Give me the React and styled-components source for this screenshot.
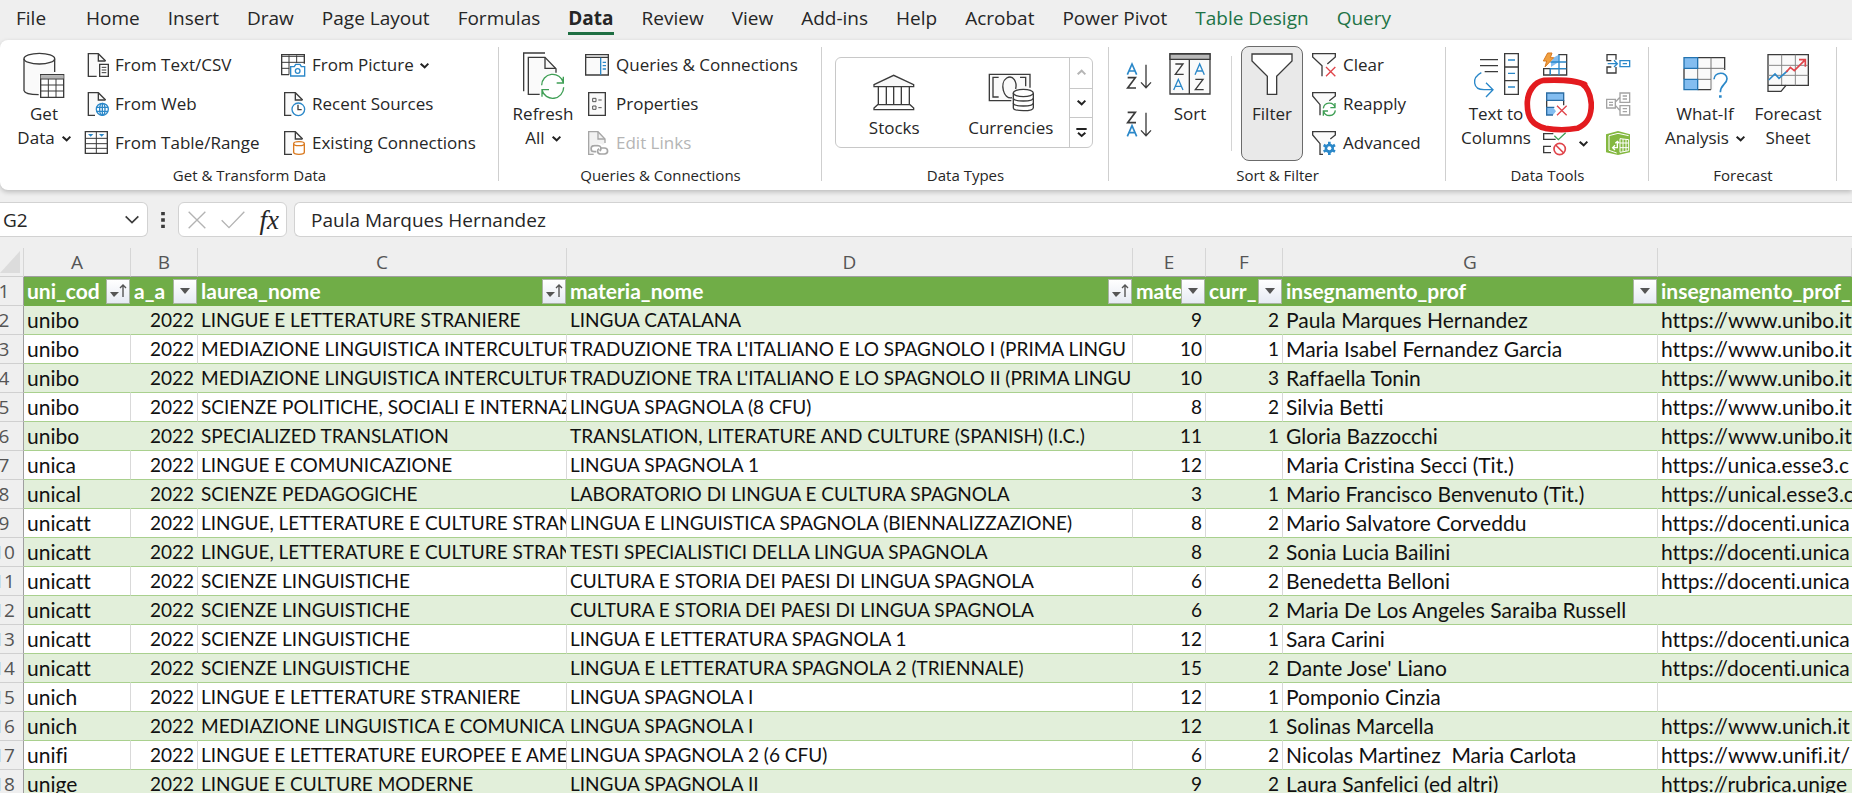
import React from "react";
import styled, { createGlobalStyle, css } from "styled-components";

const INK = "#3b3b3b";
const BLUE = "#2b88c9";
const GREEN = "#3f9f55";
const RED = "#e0454b";
const ORANGE = "#d9791f";

const GlobalStyle = createGlobalStyle`
  * { box-sizing: border-box; }
  body { margin: 0; background: #efefef; overflow: hidden; }
  button, input { font: inherit; color: inherit; }
`;

const Page = styled.div`
  display: flex;
  flex-direction: column;
  height: 100vh;
  overflow: hidden;
  background: #efefef;
  color: #262626;
  font-family: "Open Sans", "Noto Sans", sans-serif;
  font-size: 17px;
`;

/* ---------- tabs ---------- */
const TabBar = styled.nav`
  display: flex;
  flex: none;
  gap: 28px;
  height: 40px;
  padding: 3px 0 0 16px;
`;
const Tab = styled.button`
  border: 0;
  background: none;
  padding: 0;
  height: 32px;
  white-space: nowrap;
  font-size: 19px;
  font-weight: ${(p) => (p.$active ? 700 : 400)};
  color: ${(p) => (p.$contextual ? "#217346" : "#262626")};
  border-bottom: 3px solid ${(p) => (p.$active ? "#1e6e42" : "transparent")};
  &:first-child { margin-right: 12px; }
`;

/* ---------- ribbon ---------- */
const Ribbon = styled.section`
  display: flex;
  flex: none;
  height: 150px;
  padding: 5px 0 2px;
  background: #fff;
  border-radius: 8px 0 0 8px;
  box-shadow: 0 2px 5px rgba(0, 0, 0, 0.22);
  overflow: hidden;
`;
const Group = styled.div`
  position: relative;
  display: flex;
  flex-direction: column;
  flex: none;
  width: ${(p) => p.$width}px;
  &::after {
    content: "";
    position: absolute;
    right: 0;
    top: 2px;
    bottom: 7px;
    width: 1px;
    background: #cfcfcf;
  }
`;
const GroupBody = styled.div`
  display: flex;
  height: 120px;
  padding-left: ${(p) => p.$inset}px;
  gap: ${(p) => p.$gap}px;
`;
const GroupLabel = styled.div`
  text-align: center;
  font-size: 15px;
  line-height: 20px;
`;
const LargeButton = styled.button`
  display: flex;
  flex-direction: column;
  align-items: center;
  flex: none;
  gap: 4px;
  width: ${(p) => p.$width}px;
  height: 115px;
  margin-top: 1px;
  padding: 5px 0 0;
  line-height: 24px;
  white-space: nowrap;
  border: 1px solid ${(p) => (p.$pressed ? "#6b6b6b" : "transparent")};
  border-radius: 8px;
  background: ${(p) => (p.$pressed ? "#e9e9e9" : "none")};
`;
const IconBox = styled.span`
  display: flex;
  justify-content: center;
  height: 46px;
`;
const SmallColumn = styled.div`
  display: flex;
  flex-direction: column;
  flex: none;
  width: ${(p) => (p.$width ? p.$width + "px" : "auto")};
`;
const SmallButton = styled.button`
  display: flex;
  align-items: center;
  gap: 7px;
  height: 39px;
  padding: 0;
  border: 0;
  background: none;
  white-space: nowrap;
  &:disabled { color: #b5b5b5; }
`;
const Svg = styled.svg`
  display: block;
  flex: none;
  overflow: visible;
  fill: none;
  stroke: ${INK};
  stroke-width: 4;
`;
const InlineChevron = styled(Svg)`
  display: inline-block;
  vertical-align: baseline;
  margin-left: ${(p) => p.$gap || 0}px;
  margin-bottom: 1px;
`;
const SortColumn = styled.div`
  display: flex;
  flex-direction: column;
  gap: 23px;
  padding-top: 19px;
`;
const IconButton = styled.button`
  display: flex;
  align-items: center;
  justify-content: center;
  padding: 0;
  border: 0;
  background: none;
`;
const Divider = styled.div`
  width: 1px;
  height: 95px;
  margin: 11px 0 0 2px;
  background: #d4d4d4;
`;

/* ---------- data types gallery ---------- */
const Gallery = styled.div`
  display: grid;
  grid-template-columns: 1fr 1fr 23px;
  width: 258px;
  height: 91px;
  margin-top: 12px;
  border: 1px solid #c8c8c8;
  border-radius: 6px;
`;
const GalleryItem = styled.button`
  display: flex;
  flex-direction: column;
  align-items: center;
  justify-content: flex-end;
  gap: 1px;
  padding: 0 0 7px;
  border: 0;
  background: none;
  line-height: 24px;
`;
const GalleryIcon = styled.span`
  display: flex;
  align-items: center;
  height: 46px;
`;
const GalleryScroll = styled.div`
  display: grid;
  grid-template-rows: 1fr 1fr 1fr;
  border-left: 1px solid #c8c8c8;
  & > button + button { border-top: 1px solid #c8c8c8; }
`;

const RedMark = styled.svg`
  position: absolute;
  left: 74px;
  top: 30px;
  fill: none;
  pointer-events: none;
`;

/* ---------- formula bar ---------- */
const FormulaBar = styled.div`
  display: flex;
  align-items: center;
  flex: none;
  height: 35px;
  margin-top: 12px;
  font-size: 19px;
`;
const Field = styled.div`
  display: flex;
  align-items: center;
  height: 35px;
  background: #fff;
  border: 1px solid #d2d2d2;
  border-radius: 6px;
`;
const NameBox = styled(Field)`
  width: 148px;
  border-left: 0;
  border-radius: 0 6px 6px 0;
  padding: 0 8px 0 3px;
`;
const BareInput = styled.input`
  flex: 1;
  min-width: 0;
  padding: 0;
  border: 0;
  outline: 0;
  background: none;
`;
const Dots = styled(Svg)`
  margin: 0 13px;
`;
const FormulaButtons = styled(Field)`
  width: 109px;
  justify-content: space-between;
  padding: 0 7px 0 9px;
`;
const Fx = styled.span`
  font: italic 400 27px/28px "Liberation Serif", serif;
`;
const FormulaField = styled(Field)`
  flex: 1;
  margin-left: 7px;
  padding-left: 16px;
  border-right: 0;
  border-radius: 6px 0 0 6px;
`;

/* ---------- sheet ---------- */
const SheetArea = styled.main`
  flex: 1;
  min-height: 0;
  overflow: hidden;
  margin: 11px 0 0 -15px;
`;
const Sheet = styled.table`
  width: 100%;
  table-layout: fixed;
  border-collapse: separate;
  border-spacing: 0;
  font-family: Lato, "Open Sans", sans-serif;
  font-size: 19px;
  font-variant-ligatures: none;
  color: #111;
  td, th {
    height: 29px;
    padding: 0 3px;
    line-height: 28px;
    white-space: nowrap;
    overflow: hidden;
  }
`;
const headingFace = css`
  font-family: "Open Sans", "Noto Sans", sans-serif;
  font-size: 19px;
  font-weight: 400;
  color: #555;
  background: #efefef;
  text-align: center;
`;
const ColumnHeading = styled.th`
  ${headingFace}
  border-right: 1px solid #d6d6d6;
  border-bottom: 1px solid #9f9f9f;
`;
const Corner = styled.th`
  ${headingFace}
  border-right: 1px solid #d6d6d6;
  border-bottom: 1px solid #cfcfcf;
  svg { margin-left: auto; }
`;
const RowHeading = styled.th`
  ${headingFace}
  border-right: 1px solid #9f9f9f;
  border-bottom: 1px solid #d0d0d0;
`;
const FieldHeading = styled.th`
  background: #70ad47;
  border-bottom: 1px solid #70ad47;
  color: #fff;
  font-size: 21px;
  font-weight: 700;
  text-align: left;
`;
const FieldInner = styled.div`
  display: flex;
  align-items: center;
  margin-right: -2px;
  height: 28px;
  span { flex: 1; min-width: 0; overflow: hidden; }
`;
const FilterButton = styled.button`
  display: flex;
  align-items: center;
  justify-content: center;
  flex: none;
  width: 24px;
  height: 25px;
  padding: 0;
  border: 1px solid #a9b3a4;
  background: linear-gradient(#fff, #e6eaf3);
`;
const Cell = styled.td`
  font-size: ${(p) => (p.$mixedCase ? 21 : 19)}px;
  text-align: ${(p) => (p.$number ? "right" : "left")};
  background: ${(p) => (p.$band ? "#e2efda" : "#fff")};
  border-bottom: 1px solid #a9d08e;
  border-right: 1px solid ${(p) => (p.$band ? "#e2efda" : "#d9d9d9")};
  &:last-child { border-right: 0; }
`;

/* ---------- icons ---------- */
const Small = ({ children, ...rest }) => (
  <Svg width="24" height="24" viewBox="0 0 72 72" aria-hidden="true" {...rest}>{children}</Svg>
);
const Sheetlet = ({ cut = "M40 70H13V2H43" }) => (
  <>
    <path d={cut + "L65 24"} fill="#fafafa" />
    <path d="M43 3V24H64" />
  </>
);
const TextCsvIcon = () => (
  <Small>
    <Sheetlet cut="M38 70H13V2H43" />
    <path d="M47 34H73V70H47Z" fill="#fff" />
    <path d="M53 43H67M53 51H67M53 59H67" strokeWidth="3" />
  </Small>
);
const WebIcon = () => (
  <Small>
    <Sheetlet cut="M33 70H13V2H43" />
    <circle cx="55" cy="52" r="18" fill="#fff" stroke={BLUE} />
    <ellipse cx="55" cy="52" rx="8" ry="18" stroke={BLUE} />
    <path d="M38 46H72M38 58H72M55 34V70" stroke={BLUE} />
  </Small>
);
const TableRangeIcon = () => (
  <Small>
    <path d="M4 2H70V67H4Z" fill="#fff" />
    <path d="M4 22H70M4 38H70M4 52H70M37 2V67" strokeWidth="3" />
    <path d="M12 9H28L20 17ZM45 9H61L53 17Z" fill={BLUE} stroke="none" />
  </Small>
);
const PictureIcon = () => (
  <Small>
    <path d="M24 65H2V5H70V32" fill="#fff" />
    <path d="M2 10H70M2 28H70M2 46H25M24 7V65M47 7V30" strokeWidth="3" />
    <path d="M29 41H40L44 34H57L61 41H71V69H29Z" fill="#fff" stroke={BLUE} />
    <circle cx="50" cy="54" r="7" stroke={BLUE} />
  </Small>
);
const RecentIcon = () => (
  <Small>
    <Sheetlet cut="M31 70H11V2H43" />
    <circle cx="52" cy="52" r="19" fill="#fff" stroke={BLUE} />
    <path d="M51 38V53H62" />
  </Small>
);
const ExistingIcon = () => (
  <Small>
    <Sheetlet cut="M33 70H11V2H43" />
    <path d="M38 38V64C38 72 70 72 70 64V38" fill="#fff" stroke={ORANGE} />
    <ellipse cx="54" cy="38" rx="16" ry="6" fill="#fff" stroke={ORANGE} />
  </Small>
);
const PaneIcon = () => (
  <Small>
    <path d="M2 5H70V66H2Z" fill="#fafafa" />
    <path d="M2 13H70" />
    <path d="M47 14V65M53 28H63M53 38H63M53 48H63" stroke={BLUE} />
  </Small>
);
const PropertiesIcon = () => (
  <Small>
    <path d="M11 2H61V70H11Z" fill="#fafafa" />
    <path d="M23 19H33V29H23ZM23 42H33V52H23ZM40 24H50M40 47H50" strokeWidth="3" stroke="#555" />
  </Small>
);
const EditLinksIcon = () => (
  <Small style={{ stroke: "#a6a6a6" }}>
    <path d="M26 70H11V2H39L60 24V36" fill="#f2f2f2" />
    <path d="M39 3V24H60" />
    <rect x="22" y="44" width="30" height="18" rx="9" fill="#fff" stroke="#fff" strokeWidth="12" />
    <path d="M34 62H28C15 62 15 44 28 44H39C48 44 51 54 44 60M48 51H58C71 51 71 69 58 69H47C37 69 35 58 42 53" strokeWidth="5" />
  </Small>
);
const GetDataIcon = () => (
  <Svg width="42" height="46" viewBox="0 0 126 138" aria-hidden="true">
    <path d="M3 20V118C3 124 22 130 48 128V70H95V20" fill="#fafafa" stroke="none" />
    <ellipse cx="49" cy="20" rx="46" ry="16" fill="#fff" />
    <path d="M3 20V116C5 124 24 128 47 128M95 20V60" />
    <path d="M53 68H122V136H53Z" fill="#fff" />
    <path d="M53 70H122V80H53Z" fill="#b5b5b5" stroke="none" />
    <path d="M53 81H122M53 99H122M53 117H122M76 81V136M99 81V136" strokeWidth="3" />
  </Svg>
);
const RefreshIcon = () => (
  <Svg width="41" height="46" viewBox="0 0 123 138" aria-hidden="true">
    <path d="M2 118V3H66" />
    <path d="M50 127H16V16H66L99 50V62" fill="#fafafa" />
    <path d="M66 17V49H98" />
    <circle cx="89" cy="103" r="38" fill="#fff" stroke="none" />
    <path d="M56 100A33 33 0 0 1 121 92M121 74V93H101M122 106A33 33 0 0 1 57 114M57 134V113H78" stroke={GREEN} />
  </Svg>
);
const StocksIcon = () => (
  <Svg width="42" height="37" viewBox="0 0 126 111" aria-hidden="true">
    <path d="M3 32L62 4L122 32V38H3Z" fill="#f7f7f7" />
    <path d="M16 38V91M40 38V91M62 38V91M85 38V91M109 38V91" />
    <path d="M14 92H111L122 102V107H3V102Z" />
  </Svg>
);
const CurrenciesIcon = () => (
  <Svg width="46" height="39" viewBox="0 0 138 117" aria-hidden="true">
    <path d="M70 83H4V4H126V44" fill="#fafafa" />
    <path d="M32 13H15V72H32M96 13H113V40" />
    <path d="M72 74C46 80 34 30 56 15C76 4 88 28 83 48" />
    <path d="M76 60V104C76 116 136 116 136 104V60" fill="#fff" />
    <ellipse cx="106" cy="60" rx="30" ry="11" fill="#fff" />
    <path d="M76 75C76 87 136 87 136 75M76 90C76 102 136 102 136 90" />
  </Svg>
);
/* letter marks used inside the sort icons */
const LetterA = ({ x, y }) => <path d={`M${x} ${y + 32}L${x + 14} ${y}L${x + 28} ${y + 32}M${x + 6} ${y + 21}H${x + 22}`} stroke={BLUE} />;
const LetterZ = ({ x, y }) => <path d={`M${x + 1} ${y}H${x + 24}L${x + 1} ${y + 31}H${x + 26}`} />;
const SortAzIcon = ({ reverse }) => (
  <Svg width="24" height="25" viewBox="0 0 72 75" aria-hidden="true">
    <g strokeWidth="5">
      {reverse ? <><LetterZ x={1} y={1} /><LetterA x={1} y={41} /></> : <><LetterA x={1} y={0} /><LetterZ x={1} y={41} /></>}
    </g>
    <path d="M57 2V70M42 55L57 71L72 55" />
  </Svg>
);
const SortIcon = () => (
  <Svg width="42" height="43" viewBox="0 0 126 129" aria-hidden="true">
    <path d="M3 5H123V126H3Z" fill="#fafafa" />
    <path d="M3 6H123V22H3Z" fill="#b9b9b9" />
    <path d="M61 22V126" />
    <LetterZ x={18} y={36} /><LetterA x={14} y={82} />
    <LetterA x={78} y={36} /><LetterZ x={78} y={82} />
  </Svg>
);
const FilterIcon = () => (
  <Svg width="42" height="43" viewBox="0 0 126 129" aria-hidden="true">
    <path d="M3 6H123V27L77 73V127H49V73L3 27Z" fill="#fff" />
  </Svg>
);
const ClearIcon = () => (
  <Small>
    <path d="M30 70V38L2 12V2H70V12L46 33" fill="#fafafa" />
    <path d="M42 42L70 70M70 42L42 70" stroke={RED} />
  </Small>
);
const ReapplyIcon = () => (
  <Small>
    <path d="M24 70V38L2 12V2H70V12L52 26" fill="#fafafa" />
    <circle cx="52" cy="52" r="22" fill="#fff" stroke="none" />
    <path d="M34 49A18 18 0 0 1 69 46M69 33V47H55M70 55A18 18 0 0 1 35 58M34 71V57H48" stroke={GREEN} />
  </Small>
);
const AdvancedIcon = () => (
  <Small>
    <path d="M33 70H24V38L2 12V2H70V12L55 24" fill="#fafafa" />
    <path d="M52 32V72M35 42L69 62M69 42L35 62" stroke={BLUE} strokeWidth="8" />
    <circle cx="52" cy="52" r="12" fill={BLUE} stroke={BLUE} />
    <circle cx="52" cy="52" r="6" fill="#fff" stroke="none" />
  </Small>
);
const TextToColumnsIcon = () => (
  <Svg width="45" height="46" viewBox="0 0 135 138" aria-hidden="true">
    <path d="M18 23H72M18 41H72M32 59H72" />
    <path d="M92 5H133V127H92ZM92 45H133M92 86H133" fill="#fff" />
    <path d="M102 24H123M102 64H123M102 105H123M22 62C-8 78 -4 112 30 113H56M36 92L57 113L36 135" stroke={BLUE} />
  </Svg>
);
const FlashFillIcon = () => (
  <Small>
    <path d="M46 5H71V66H2V47H71M22 47V66" />
    <path d="M31 14L47 5V27L24 42V28Z" fill="#83bdf0" stroke="none" />
    <path d="M48 5V66M22 27H70M22 47H70M22 46V66" stroke={BLUE} />
    <path d="M14 0H27L22 14H32L6 42L11 24H1Z" fill="#f0a040" stroke={ORANGE} strokeWidth="3" />
  </Small>
);
const RemoveDuplicatesIcon = () => (
  <Small>
    <path d="M12 3H62V24H12Z" fill="#83bdf0" stroke="none" />
    <path d="M12 46H30L39 58L30 69H12Z" fill="#83bdf0" stroke="none" />
    <path d="M62 25V40M11 25V46" />
    <path d="M11 3H62V25H11ZM34 46H11V69H30" stroke="#2b6ca3" />
    <path d="M42 41L71 70M71 41L42 70" stroke={RED} />
  </Small>
);
const ValidationIcon = () => (
  <Small>
    <path d="M31 8H2V25H38M24 46H2V65H24" />
    <path d="M34 14L46 26L68 5" stroke={GREEN} />
    <circle cx="50" cy="54" r="17" fill="#fff" stroke={RED} strokeWidth="5" />
    <path d="M38 42L62 66" stroke={RED} strokeWidth="5" />
  </Small>
);
const ConsolidateIcon = () => (
  <Small>
    <path d="M30 20V5H3V23H16M30 42V60H3V42H16" />
    <path d="M42 23H71V41H42ZM50 32H63M5 32H34M24 22L34 32L24 42" stroke={BLUE} />
  </Small>
);
const RelationsIcon = () => (
  <Small style={{ stroke: "#a3a3a3" }}>
    <path d="M2 22H28V48H2ZM42 3H71V31H42ZM42 41H71V69H42ZM28 30L42 16M28 40L42 56M9 31H21M9 39H21M50 12H63M50 21H63M50 50H63M50 59H63" />
  </Small>
);
const DataModelIcon = () => (
  <Small>
    <path d="M0 10L36 0L72 10V64L36 72L0 64Z" fill="#84b840" stroke="none" />
    <path d="M9 58V14L36 7L68 14M9 58L32 66" stroke="#fff" strokeWidth="3" />
    <path d="M42 23L68 26V59L42 64ZM42 36H68M42 50H68M51 24V62M60 25V61" stroke="#fff" strokeWidth="3" />
    <path d="M34 32V50H20M27 43L20 50L27 57M28 37L34 31L40 37" stroke="#fff" />
  </Small>
);
const WhatIfIcon = () => (
  <Svg width="45" height="46" viewBox="0 0 135 138" aria-hidden="true">
    <path d="M3 17H125V60L92 80V113H3Z" fill="#fafafa" stroke="none" />
    <path d="M3 17H44V49H3ZM3 82H44V113H3Z" fill="#83bdf0" stroke="none" />
    <path d="M44 17H125V54M44 113H84M3 50V82" />
    <path d="M44 49H125M44 82H84M84 17V113M44 50V82" strokeWidth="3" stroke="#777" />
    <path d="M3 17H44V49H3ZM3 82H44V113H3Z" stroke="#2373b0" />
    <path d="M93 82C94 58 132 58 132 80C132 96 112 98 112 121" stroke={BLUE} strokeWidth="5" />
    <path d="M108 130H116V137H108Z" fill={BLUE} stroke="none" />
  </Svg>
);
const ForecastIcon = () => (
  <Svg width="42" height="46" viewBox="0 0 126 138" aria-hidden="true">
    <path d="M3 8H124V100H57L42 118H3Z" fill="#fafafa" />
    <path d="M3 40H124M3 70H124M44 8V100M85 8V100" strokeWidth="3" stroke="#888" />
    <path d="M3 100H57" />
    <path d="M5 84L24 66L36 79L62 56" stroke={BLUE} strokeWidth="5" />
    <path d="M58 60L70 46L82 56L112 26M96 23H115V44" stroke={RED} strokeWidth="5" />
  </Svg>
);
const Chevron = ({ gap, color = "#222" , up }) => (
  <InlineChevron $gap={gap} width="9" height="9" viewBox="0 0 27 27" style={{ stroke: color, strokeWidth: 6 }} aria-hidden="true">
    <path d={up ? "M2 19L14 8L25 19" : "M2 8L14 19L25 8"} />
  </InlineChevron>
);

/* ---------- data ---------- */
const TABS = ["File", "Home", "Insert", "Draw", "Page Layout", "Formulas", "Data", "Review", "View", "Add-ins", "Help", "Acrobat", "Power Pivot", "Table Design", "Query"];

const COLUMNS = [
  { letter: "A", name: "uni_cod", width: 107, sorted: true },
  { letter: "B", name: "a_a", width: 67 },
  { letter: "C", name: "laurea_nome", width: 369, sorted: true },
  { letter: "D", name: "materia_nome", width: 566, sorted: true },
  { letter: "E", name: "mate", width: 73 },
  { letter: "F", name: "curr_", width: 77 },
  { letter: "G", name: "insegnamento_prof", width: 375 },
  { letter: "", name: "insegnamento_prof_", last: true },
];
const NUMBER_COLUMNS = [1, 4, 5];
const MIXED_CASE_COLUMNS = [0, 6, 7];

const MED = "MEDIAZIONE LINGUISTICA INTERCULTUR";
const LLS = "LINGUE E LETTERATURE STRANIERE";
const LLC = "LINGUE, LETTERATURE E CULTURE STRAN";
const SL = "SCIENZE LINGUISTICHE";
const UNIBO = "https://www.unibo.it";
const DOCENTI = "https://docenti.unica";
const ROWS = [
  ["unibo", 2022, LLS, "LINGUA CATALANA", 9, 2, "Paula Marques Hernandez", UNIBO],
  ["unibo", 2022, MED, "TRADUZIONE TRA L'ITALIANO E LO SPAGNOLO I (PRIMA LINGU", 10, 1, "Maria Isabel Fernandez Garcia", UNIBO],
  ["unibo", 2022, MED, "TRADUZIONE TRA L'ITALIANO E LO SPAGNOLO II (PRIMA LINGU", 10, 3, "Raffaella Tonin", UNIBO],
  ["unibo", 2022, "SCIENZE POLITICHE, SOCIALI E INTERNAZ", "LINGUA SPAGNOLA (8 CFU)", 8, 2, "Silvia Betti", UNIBO],
  ["unibo", 2022, "SPECIALIZED TRANSLATION", "TRANSLATION, LITERATURE AND CULTURE (SPANISH) (I.C.)", 11, 1, "Gloria Bazzocchi", UNIBO],
  ["unica", 2022, "LINGUE E COMUNICAZIONE", "LINGUA SPAGNOLA 1", 12, "", "Maria Cristina Secci (Tit.)", "https://unica.esse3.c"],
  ["unical", 2022, "SCIENZE PEDAGOGICHE", "LABORATORIO DI LINGUA E CULTURA SPAGNOLA", 3, 1, "Mario Francisco Benvenuto (Tit.)", "https://unical.esse3.c"],
  ["unicatt", 2022, LLC, "LINGUA E LINGUISTICA SPAGNOLA (BIENNALIZZAZIONE)", 8, 2, "Mario Salvatore Corveddu", DOCENTI],
  ["unicatt", 2022, LLC, "TESTI SPECIALISTICI DELLA LINGUA SPAGNOLA", 8, 2, "Sonia Lucia Bailini", DOCENTI],
  ["unicatt", 2022, SL, "CULTURA E STORIA DEI PAESI DI LINGUA SPAGNOLA", 6, 2, "Benedetta Belloni", DOCENTI],
  ["unicatt", 2022, SL, "CULTURA E STORIA DEI PAESI DI LINGUA SPAGNOLA", 6, 2, "Maria De Los Angeles Saraiba Russell", ""],
  ["unicatt", 2022, SL, "LINGUA E LETTERATURA SPAGNOLA 1", 12, 1, "Sara Carini", DOCENTI],
  ["unicatt", 2022, SL, "LINGUA E LETTERATURA SPAGNOLA 2 (TRIENNALE)", 15, 2, "Dante Jose' Liano", DOCENTI],
  ["unich", 2022, LLS, "LINGUA SPAGNOLA I", 12, 1, "Pomponio Cinzia", ""],
  ["unich", 2022, "MEDIAZIONE LINGUISTICA E COMUNICA", "LINGUA SPAGNOLA I", 12, 1, "Solinas Marcella", "https://www.unich.it"],
  ["unifi", 2022, "LINGUE E LETTERATURE EUROPEE E AME", "LINGUA SPAGNOLA 2 (6 CFU)", 6, 2, "Nicolas Martinez\u00a0 Maria Carlota", "https://www.unifi.it/"],
  ["unige", 2022, "LINGUE E CULTURE MODERNE", "LINGUA SPAGNOLA II", 9, 2, "Laura Sanfelici (ed altri)", "https://rubrica.unige"],
];

const Command = ({ icon, children, ...rest }) => (
  <SmallButton {...rest}>{icon}<span>{children}</span></SmallButton>
);
const Large = ({ icon, children, ...rest }) => (
  <LargeButton {...rest}><IconBox>{icon}</IconBox><span>{children}</span></LargeButton>
);

export default function App() {
  return (
    <Page>
      <GlobalStyle />
      <TabBar aria-label="Ribbon tabs">
        {TABS.map((t, i) => <Tab key={t} $active={t === "Data"} $contextual={i > 12}>{t}</Tab>)}
      </TabBar>

      <Ribbon>
        <Group $width={499}>
          <GroupBody $inset={14} $gap={10}>
            <Large $width={60} icon={<GetDataIcon />}>Get<br />Data<Chevron gap={7} /></Large>
            <SmallColumn $width={187}>
              <Command icon={<TextCsvIcon />}>From Text/CSV</Command>
              <Command icon={<WebIcon />}>From Web</Command>
              <Command icon={<TableRangeIcon />}>From Table/Range</Command>
            </SmallColumn>
            <SmallColumn>
              <Command icon={<PictureIcon />}>From Picture<Chevron gap={6} /></Command>
              <Command icon={<RecentIcon />}>Recent Sources</Command>
              <Command icon={<ExistingIcon />}>Existing Connections</Command>
            </SmallColumn>
          </GroupBody>
          <GroupLabel>Get &amp; Transform Data</GroupLabel>
        </Group>

        <Group $width={323}>
          <GroupBody $inset={13} $gap={11}>
            <Large $width={62} icon={<RefreshIcon />}>Refresh<br />All<Chevron gap={7} /></Large>
            <SmallColumn>
              <Command icon={<PaneIcon />}>Queries &amp; Connections</Command>
              <Command icon={<PropertiesIcon />}>Properties</Command>
              <Command icon={<EditLinksIcon />} disabled>Edit Links</Command>
            </SmallColumn>
          </GroupBody>
          <GroupLabel>Queries &amp; Connections</GroupLabel>
        </Group>

        <Group $width={287}>
          <GroupBody $inset={13} $gap={0}>
            <Gallery>
              <GalleryItem><GalleryIcon><StocksIcon /></GalleryIcon>Stocks</GalleryItem>
              <GalleryItem><GalleryIcon><CurrenciesIcon /></GalleryIcon>Currencies</GalleryItem>
              <GalleryScroll>
                <IconButton aria-label="Scroll up"><Chevron up color="#b5b5b5" /></IconButton>
                <IconButton aria-label="Scroll down"><Chevron /></IconButton>
                <IconButton aria-label="More">
                  <Svg width="11" height="10" viewBox="0 0 33 30"><path d="M1 3H32M6 14L17 24L28 14" stroke="#222" strokeWidth="6" /></Svg>
                </IconButton>
              </GalleryScroll>
            </Gallery>
          </GroupBody>
          <GroupLabel>Data Types</GroupLabel>
        </Group>

        <Group $width={337}>
          <GroupBody $inset={18} $gap={9}>
            <SortColumn>
              <IconButton aria-label="Sort A to Z"><SortAzIcon /></IconButton>
              <IconButton aria-label="Sort Z to A"><SortAzIcon reverse /></IconButton>
            </SortColumn>
            <Large $width={60} icon={<SortIcon />}>Sort</Large>
            <Divider />
            <Large $width={62} $pressed aria-pressed="true" icon={<FilterIcon />}>Filter</Large>
            <SmallColumn>
              <Command icon={<ClearIcon />}>Clear</Command>
              <Command icon={<ReapplyIcon />}>Reapply</Command>
              <Command icon={<AdvancedIcon />}>Advanced</Command>
            </SmallColumn>
          </GroupBody>
          <GroupLabel>Sort &amp; Filter</GroupLabel>
        </Group>

        <Group $width={203}>
          <GroupBody $inset={12} $gap={9}>
            <Large $width={76} icon={<TextToColumnsIcon />}>Text to<br />Columns</Large>
            <SmallColumn $width={54}>
              <Command icon={<FlashFillIcon />} aria-label="Flash Fill" />
              <Command icon={<RemoveDuplicatesIcon />} aria-label="Remove Duplicates" />
              <Command icon={<ValidationIcon />} aria-label="Data Validation"><Chevron gap={5} /></Command>
            </SmallColumn>
            <SmallColumn>
              <Command icon={<ConsolidateIcon />} aria-label="Consolidate" />
              <Command icon={<RelationsIcon />} aria-label="Relationships" />
              <Command icon={<DataModelIcon />} aria-label="Manage Data Model" />
            </SmallColumn>
          </GroupBody>
          <GroupLabel>Data Tools</GroupLabel>
          <RedMark width="74" height="58" viewBox="0 0 222 174" aria-hidden="true">
            <path d="M194 28C160 14 120 14 72 16C40 22 24 52 22 80C20 130 38 150 76 160C112 166 150 164 172 160C206 146 214 120 214 88C212 60 204 38 186 26" stroke="#e31b1f" strokeWidth="17" strokeLinecap="round" />
          </RedMark>
        </Group>

        <Group $width={188}>
          <GroupBody $inset={14} $gap={2}>
            <Large $width={84} icon={<WhatIfIcon />}>What-If<br />Analysis<Chevron gap={7} /></Large>
            <Large $width={78} icon={<ForecastIcon />}>Forecast<br />Sheet</Large>
          </GroupBody>
          <GroupLabel>Forecast</GroupLabel>
        </Group>
      </Ribbon>

      <FormulaBar>
        <NameBox>
          <BareInput aria-label="Name Box" defaultValue="G2" />
          <IconButton aria-label="Open name list"><Svg width="14" height="9" viewBox="0 0 42 27"><path d="M2 4L21 23L40 4" strokeWidth="5" /></Svg></IconButton>
        </NameBox>
        <Dots width="4" height="16" viewBox="0 0 12 48"><path d="M6 0V10M6 19V29M6 38V48" strokeWidth="11" /></Dots>
        <FormulaButtons>
          <IconButton aria-label="Cancel"><Svg width="18" height="18" viewBox="0 0 54 54"><path d="M2 2L52 52M52 2L2 52" stroke="#b3b3b3" /></Svg></IconButton>
          <IconButton aria-label="Enter"><Svg width="24" height="18" viewBox="0 0 72 54"><path d="M2 28L24 50L70 2" stroke="#b3b3b3" /></Svg></IconButton>
          <IconButton aria-label="Insert Function"><Fx>fx</Fx></IconButton>
        </FormulaButtons>
        <FormulaField><BareInput aria-label="Formula" defaultValue="Paula Marques Hernandez" /></FormulaField>
      </FormulaBar>

      <SheetArea>
        <Sheet>
          <colgroup>
            <col style={{ width: 39 }} />
            {COLUMNS.map((c) => <col key={c.name} style={{ width: c.width }} />)}
          </colgroup>
          <thead>
            <tr>
              <Corner aria-label="Select all"><Svg width="20" height="22" viewBox="0 0 20 22"><path d="M20 0V22H0Z" fill="#dcdcdc" stroke="none" /></Svg></Corner>
              {COLUMNS.map((c) => <ColumnHeading key={c.name} scope="col">{c.letter}</ColumnHeading>)}
            </tr>
            <tr>
              <RowHeading scope="row">1</RowHeading>
              {COLUMNS.map((c) => (
                <FieldHeading key={c.name} scope="col">
                  <FieldInner>
                    <span>{c.name}</span>
                    {!c.last && (
                      <FilterButton aria-label={"Filter " + c.name}>
                        {c.sorted ? (
                          <Svg width="18" height="16" viewBox="0 0 18 16"><path d="M1 9H10L5 14Z" fill="#555" stroke="none" /><path d="M14 14V2M11 5L14 2L17 5" stroke="#555" strokeWidth="1.4" /></Svg>
                        ) : (
                          <Svg width="10" height="6" viewBox="0 0 10 6"><path d="M0 0H10L5 6Z" fill="#555" stroke="none" /></Svg>
                        )}
                      </FilterButton>
                    )}
                  </FieldInner>
                </FieldHeading>
              ))}
            </tr>
          </thead>
          <tbody>
            {ROWS.map((row, r) => (
              <tr key={r}>
                <RowHeading scope="row">{r + 2}</RowHeading>
                {row.map((value, i) => (
                  <Cell
                    key={i}
                    $band={r % 2 === 0}
                    $number={NUMBER_COLUMNS.includes(i)}
                    $mixedCase={MIXED_CASE_COLUMNS.includes(i)}
                  >
                    {value}
                  </Cell>
                ))}
              </tr>
            ))}
          </tbody>
        </Sheet>
      </SheetArea>
    </Page>
  );
}
